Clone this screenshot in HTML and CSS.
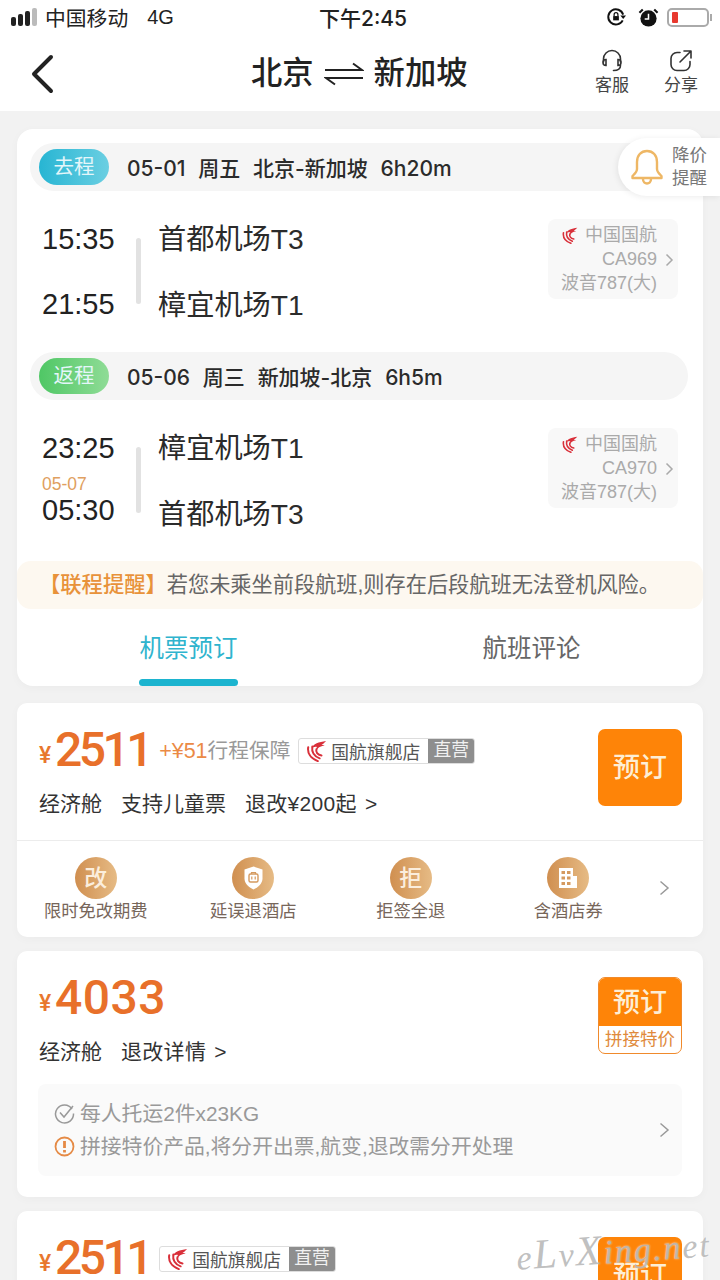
FILE: index.html
```html
<!DOCTYPE html>
<html lang="zh-CN">

<head>
    <meta charset="UTF-8">
    <meta name="viewport" content="width=device-width, initial-scale=1.0">
    <title>北京 - 新加坡</title>
    <link rel="stylesheet" href="styles.css">
</head>

<body>
    <svg class="defs" width="0" height="0">
        <symbol id="airchina" viewBox="0 0 24 24">
            <g fill="none" stroke="#d9303a" stroke-width="2.200" stroke-linecap="round">
                <path d="M3.500 8C2.500 14 6 20 14 23" />
                <path d="M8 7C7 13 10 18 16 20" />
                <path d="M12.500 10C11.500 13 13.500 16 18 17" />
            </g>
            <path d="M7 9C9 4 15 2 23 1c-2 2-3.500 3.500-5 4.500 1.500 0 2.500 0 3.500.5-2.500.5-4.500 1-6 2-1.500 1-2.500 2.500-3 4-.5-1.500-.3-3 .5-4.500C10.500 7 8.500 8 7 9z" fill="#d9303a" />
        </symbol>
    </svg>
    <div class="page">
        <div class="status">
            <div class="status-left">
                <span class="signal"><i></i><i></i><i></i><i class="off"></i></span>
                <span class="carrier">中国移动</span>
                <span class="net">4G</span>
            </div>
            <div class="status-time">下午2:45</div>
            <div class="status-right">
                <svg width="21" height="21" viewBox="0 0 22 22" fill="none" stroke="#111" stroke-width="2">
                    <path d="M17.500 14A8 8 0 1 1 18 8" />
                    <path d="M15 9h6l-3 3.500z" fill="#111" stroke="none" />
                    <rect x="7.500" y="9.500" width="6" height="4.500" fill="#111" stroke="none" />
                    <path d="M8.500 9.500V8a2 2 0 0 1 4 0v1.500" stroke-width="1.300" />
                </svg>
                <svg class="alarm" width="21" height="21" viewBox="0 0 22 22">
                    <circle cx="11" cy="12" r="8.500" fill="#111" />
                    <path d="M11 7v5.500H7" fill="none" stroke="#fff" stroke-width="1.600" />
                    <path d="M1.500 6L5 2.500M20.500 6L17 2.500" stroke="#111" stroke-width="2.200" />
                </svg>
                <span class="battery"><i></i></span>
            </div>
        </div>

        <div class="nav">
            <svg class="back" width="26" height="40" viewBox="0 0 26 40" fill="none" stroke="#222" stroke-width="4" stroke-linecap="round" stroke-linejoin="round">
                <path d="M22 3L5 20l17 17" />
            </svg>
            <div class="nav-title">
                <span>北京</span>
                <svg width="40" height="24" viewBox="0 0 40 24" fill="none" stroke="#222" stroke-width="2">
                    <path d="M1 8h37L29 1.500" />
                    <path d="M39 16H2l9 6.500" />
                </svg>
                <span>新加坡</span>
            </div>
            <div class="nav-tools">
                <div class="tool">
                    <svg width="24" height="24" viewBox="0 0 24 24" fill="none" stroke="#333" stroke-width="1.600" stroke-linecap="round">
                        <path d="M3.500 13V10a8.500 8.500 0 0 1 17 0v3" />
                        <path d="M6 10.500c-2 0-3 1.300-3 3s1 3 3 3z" />
                        <path d="M18 10.500c2 0 3 1.300 3 3s-1 3-3 3z" />
                        <path d="M20.500 16.500c0 3.500-3 5-7 5" />
                    </svg>
                    <span>客服</span>
                </div>
                <div class="tool">
                    <svg width="24" height="24" viewBox="0 0 24 24" fill="none" stroke="#333" stroke-width="1.600" stroke-linecap="round" stroke-linejoin="round">
                        <path d="M11 3.500H8a6 6 0 0 0-6 6v6a6 6 0 0 0 6 6h7a6 6 0 0 0 6-6v-3" />
                        <path d="M11 13L21.500 2.500M15 2h7v7" />
                    </svg>
                    <span>分享</span>
                </div>
            </div>
        </div>

        <div class="main">
            <div class="card trip">
                <div class="seg">
                    <span class="seg-tag tag-go">去程</span>
                    <span class="seg-text">05-01&nbsp; 周五&nbsp; 北京-新加坡&nbsp; 6h20m</span>
                </div>
                <div class="flight">
                    <div class="times">
                        <div class="time">15:35</div>
                        <div class="time">21:55</div>
                    </div>
                    <div class="bar"></div>
                    <div class="airports">
                        <div>首都机场T3</div>
                        <div>樟宜机场T1</div>
                    </div>
                    <div class="plane">
                        <div class="plane-text">
                            <div><svg class="logo-sm" width="17" height="17"><use href="#airchina" /></svg> 中国国航</div>
                            <div>CA969</div>
                            <div>波音787(大)</div>
                        </div>
                        <svg class="chev-sm" width="9" height="14" viewBox="0 0 9 14" fill="none" stroke="#aaa" stroke-width="1.500"><path d="M1.500 1.500L7 7l-5.500 5.500" /></svg>
                    </div>
                </div>
                <div class="seg">
                    <span class="seg-tag tag-back">返程</span>
                    <span class="seg-text">05-06&nbsp; 周三&nbsp; 新加坡-北京&nbsp; 6h5m</span>
                </div>
                <div class="flight">
                    <div class="times">
                        <div class="time">23:25</div>
                        <div class="time time-next">
                            <small>05-07</small>
                            05:30
                        </div>
                    </div>
                    <div class="bar"></div>
                    <div class="airports">
                        <div>樟宜机场T1</div>
                        <div>首都机场T3</div>
                    </div>
                    <div class="plane">
                        <div class="plane-text">
                            <div><svg class="logo-sm" width="17" height="17"><use href="#airchina" /></svg> 中国国航</div>
                            <div>CA970</div>
                            <div>波音787(大)</div>
                        </div>
                        <svg class="chev-sm" width="9" height="14" viewBox="0 0 9 14" fill="none" stroke="#aaa" stroke-width="1.500"><path d="M1.500 1.500L7 7l-5.500 5.500" /></svg>
                    </div>
                </div>
                <div class="notice"><b>【联程提醒】</b><span>若您未乘坐前段航班,则存在后段航班无法登机风险。</span></div>
                <div class="tabs">
                    <div class="tab active">机票预订</div>
                    <div class="tab">航班评论</div>
                </div>
                <div class="remind">
                    <svg width="34" height="38" viewBox="0 0 34 38" fill="none" stroke="#eeb765" stroke-width="2.400" stroke-linejoin="round">
                        <path d="M17 3c-6 0-10 4.500-10 11v7c0 3-2.500 5-4.500 7v2h29v-2c-2-2-4.500-4-4.500-7v-7C27 7.500 23 3 17 3z" />
                        <path d="M13 31c0 3 2 4.500 4 4.500s4-1.500 4-4.500" />
                    </svg>
                    <div>降价<br>提醒</div>
                </div>
            </div>

            <div class="card offer-card">
                <div class="offer">
                    <div class="offer-main">
                        <div class="price-line">
                            <span class="yen">¥</span><span class="price price-tight">2511</span>
                            <span class="extra"><em>+¥51</em>行程保障</span>
                            <span class="badge"><svg width="22" height="22"><use href="#airchina" /></svg><span class="badge-name">国航旗舰店</span><span class="badge-tag">直营</span></span>
                        </div>
                        <div class="sub-line"><span>经济舱</span><span>支持儿童票</span><span class="sub-link">退改¥200起 &gt;</span></div>
                    </div>
                    <div class="book">预订</div>
                </div>
                <div class="perks">
                    <div class="perk"><span class="perk-ico">改</span>限时免改期费</div>
                    <div class="perk">
                        <span class="perk-ico">
                            <svg width="19" height="24" viewBox="0 0 19 24" fill="#fff">
                                <path d="M9.500 0.500l9 3v9c0 5-4 8.500-9 11-5-2.500-9-6-9-11v-9z" />
                                <rect x="5" y="8" width="9" height="8" rx="1.500" fill="none" stroke="#d59a5f" stroke-width="1.400" />
                                <path d="M7.500 8V6.500h4V8M7.800 10.500v3M11.200 10.500v3" fill="none" stroke="#d59a5f" stroke-width="1.200" />
                            </svg>
                        </span>延误退酒店
                    </div>
                    <div class="perk"><span class="perk-ico">拒</span>拒签全退</div>
                    <div class="perk">
                        <span class="perk-ico">
                            <svg width="20" height="22" viewBox="0 0 20 22" fill="#fff">
                                <path d="M1 1h14v8h4v12H1z" />
                                <path d="M3.500 4h3.500v3H3.500zM9 4h3.500v3H9zM3.500 9.500h3.500v3H3.500zM9 9.500h3.500v3H9zM3.500 15h3.500v3H3.500zM9 15h3.500v3H9z" fill="#d59a5f" />
                            </svg>
                        </span>含酒店券
                    </div>
                    <svg class="chev" width="11" height="16" viewBox="0 0 11 16" fill="none" stroke="#999" stroke-width="1.500"><path d="M1.500 1.500L9 8l-7.500 6.500" /></svg>
                </div>
            </div>

            <div class="card offer-card">
                <div class="offer">
                    <div class="offer-main">
                        <div class="price-line">
                            <span class="yen">¥</span><span class="price price-wide">4033</span>
                        </div>
                        <div class="sub-line"><span>经济舱</span><span class="sub-link">退改详情 &gt;</span></div>
                    </div>
                    <div class="book book-split">
                        <div class="book-top">预订</div>
                        <div class="book-bottom">拼接特价</div>
                    </div>
                </div>
                <div class="rules">
                    <div class="rules-list">
                        <div class="rule">
                            <svg width="21" height="21" viewBox="0 0 21 21" fill="none" stroke="#999" stroke-width="1.500">
                                <path d="M18 6a9 9 0 1 0 1.500 4.500" />
                                <path d="M6 9.500l4 4.500 9-11" />
                            </svg>
                            每人托运2件x23KG
                        </div>
                        <div class="rule">
                            <svg width="21" height="21" viewBox="0 0 21 21" fill="none" stroke="#e58a45" stroke-width="1.800">
                                <circle cx="10.500" cy="10.500" r="9" />
                                <path d="M10.500 5v7" stroke-width="2.800" />
                                <path d="M10.500 14v2.500" stroke-width="2.800" />
                            </svg>
                            拼接特价产品,将分开出票,航变,退改需分开处理
                        </div>
                    </div>
                    <svg width="11" height="16" viewBox="0 0 11 16" fill="none" stroke="#999" stroke-width="1.500"><path d="M1.500 1.500L9 8l-7.500 6.500" /></svg>
                </div>
            </div>

            <div class="card offer-card">
                <div class="offer">
                    <div class="offer-main">
                        <div class="price-line">
                            <span class="yen">¥</span><span class="price price-tight">2511</span>
                            <span class="badge"><svg width="22" height="22"><use href="#airchina" /></svg><span class="badge-name">国航旗舰店</span><span class="badge-tag">直营</span></span>
                        </div>
                    </div>
                    <div class="book">预订</div>
                </div>
            </div>
        </div>
        <div class="watermark">e<span>L</span>v<span>X</span>ing.net</div>
    </div>
</body>

</html>
```
FILE: styles.css
```css
* {
    margin: 0;
    padding: 0;
    box-sizing: border-box;
}

html, body {
    height: 1280px;
    overflow: hidden;
}

body {
    font-family: "Liberation Sans", "Noto Sans CJK SC", sans-serif;
    color: #222;
    background-color: #f2f2f2;
}

.defs {
    position: absolute;
}

.page {
    width: 720px;
    height: 1280px;
    position: relative;
    overflow: hidden;
}

/* status bar */
.status {
    height: 36px;
    padding: 0 11px 2px 11px;
    background-color: #fff;
    display: flex;
    align-items: center;
    justify-content: space-between;
    font-size: 20.800px;
    color: #222;
}

.status-left {
    width: 300px;
    display: flex;
    align-items: center;
}

.signal {
    display: flex;
    align-items: flex-end;
    gap: 2px;
    height: 18px;
    margin-right: 8px;
}

.signal i {
    width: 5px;
    border-radius: 2px;
    background-color: #222;
    height: 9px;
}

.signal i:nth-child(2) {
    height: 12px;
}

.signal i:nth-child(3) {
    height: 15px;
}

.signal i.off {
    height: 18px;
    background-color: #bbb;
}

.net {
    margin-left: 19px;
    font-size: 20px;
}

.status-time {
    font-family: Inter, "Noto Sans CJK SC", sans-serif;
    font-size: 21px;
    font-weight: 500;
    margin-left: 8px;
    white-space: nowrap;
}

.status-right {
    flex: 1;
    display: flex;
    align-items: center;
    justify-content: flex-end;
    gap: 8px;
}

.alarm {
    margin-left: 3px;
}

.battery {
    width: 42px;
    height: 19px;
    border: 2px solid #aaa;
    border-radius: 5px;
    padding: 2px 3px;
    display: block;
    position: relative;
}

.battery::after {
    content: "";
    position: absolute;
    right: -5px;
    top: 4px;
    width: 2px;
    height: 7px;
    background-color: #aaa;
}

.battery i {
    display: block;
    width: 6px;
    height: 11px;
    border-radius: 1px;
    background-color: #e8392f;
}

/* title bar */
.nav {
    height: 75px;
    background-color: #fff;
    display: flex;
    align-items: center;
    position: relative;
    padding: 0 22px 0 29px;
}

.nav-title {
    position: absolute;
    left: 251px;
    top: 16px;
    display: flex;
    align-items: center;
    gap: 10px;
    font-size: 31.300px;
    font-weight: 500;
    line-height: 44px;
}

.nav-tools {
    margin-left: auto;
    display: flex;
    gap: 35px;
}

.tool {
    display: flex;
    flex-direction: column;
    align-items: center;
    font-size: 17px;
    line-height: 24px;
    color: #444;
    gap: 1px;
}

/* content */
.main {
    padding: 18px 17px 0;
    display: flex;
    flex-direction: column;
    gap: 14px;
}

.card {
    background-color: #fff;
    border-radius: 10px;
    box-shadow: 0 2px 10px rgba(0, 0, 0, 0.03);
}

.trip {
    position: relative;
    padding-top: 14px;
    margin-bottom: 3px;
    border-radius: 16px;
}

.seg {
    height: 48px;
    margin: 0 15px 0 13px;
    padding-left: 9px;
    border-radius: 24px;
    background-color: #f5f5f5;
    display: flex;
    align-items: center;
}

.seg-tag {
    width: 70px;
    height: 36px;
    border-radius: 18px;
    line-height: 35px;
    text-align: center;
    font-size: 20.500px;
    color: #e4f6fa;
}

.tag-go {
    background: linear-gradient(90deg, #27b5d3, #6bcfe2);
}

.tag-back {
    background: linear-gradient(90deg, #4fc765, #8fdc96);
}

.seg-text {
    margin-left: 18px;
    font-family: Inter, "Noto Sans CJK SC", sans-serif;
    font-size: 21px;
    font-weight: 500;
    word-spacing: 0.800px;
    color: #2b2b2b;
    white-space: nowrap;
}

.flight {
    height: 161px;
    padding: 28px 25px 0;
    display: flex;
    position: relative;
}

.times {
    width: 94px;
    flex-shrink: 0;
    display: flex;
    flex-direction: column;
    gap: 25px;
}

.time {
    height: 40px;
    font-size: 29px;
    line-height: 40px;
    color: #222;
    position: relative;
}

.time-next {
    margin-top: -3px;
}

.time small {
    position: absolute;
    left: 0;
    top: -16px;
    font-size: 17.500px;
    line-height: 20px;
    color: #e0a060;
}

.bar {
    width: 5px;
    height: 66px;
    margin-top: 19px;
    border-radius: 3px;
    background-color: #e2e2e2;
    flex-shrink: 0;
}

.airports {
    margin-left: 17px;
    display: flex;
    flex-direction: column;
    gap: 25px;
    font-size: 28.200px;
    line-height: 41px;
    color: #2b2b2b;
}

.plane {
    margin-left: auto;
    width: 130px;
    height: 80px;
    border-radius: 8px;
    background-color: #f8f8f8;
    display: flex;
    align-items: center;
    justify-content: flex-end;
    padding-right: 4px;
    position: relative;
}

.plane-text {
    text-align: right;
    font-size: 18px;
    line-height: 24px;
    color: #aaa;
    white-space: nowrap;
    margin-right: 8px;
}

.logo-sm {
    vertical-align: -3px;
    margin-right: 2px;
}

.chev-sm {
    margin-top: 2px;
}

.notice {
    height: 48px;
    padding-left: 22px;
    border-radius: 14px;
    line-height: 48px;
    background-color: #fdf8f0;
    font-size: 21.300px;
    color: #666;
    white-space: nowrap;
    display: flex;
}

.notice b {
    font-weight: 500;
    color: #e8923a;
}

.notice span {
    font-size: 21.200px;
}

.tabs {
    height: 77px;
    display: flex;
}

.tab {
    flex: 1;
    text-align: center;
    font-size: 24.500px;
    line-height: 79px;
    color: #666;
    position: relative;
}

.tab.active {
    color: #2fb4ce;
}

.tab.active::after {
    content: "";
    position: absolute;
    left: 122px;
    bottom: 0;
    width: 99px;
    height: 7px;
    border-radius: 4px;
    background-color: #1cb4cf;
}

.remind {
    position: absolute;
    top: 9px;
    right: -17px;
    width: 102px;
    height: 58px;
    padding-left: 12px;
    border-radius: 29px 0 0 29px;
    background-color: #fff;
    box-shadow: -1px 1px 6px rgba(0, 0, 0, 0.08);
    display: flex;
    align-items: center;
    gap: 8px;
    font-size: 17.500px;
    line-height: 23px;
    color: #777;
}

/* offers */
.offer {
    display: flex;
    justify-content: space-between;
    padding: 26px 21px 0 22px;
}

.price-line {
    height: 46px;
    padding-bottom: 5px;
    display: flex;
    align-items: center;
}

.yen {
    font-family: Roboto, sans-serif;
    font-weight: 500;
    color: #e8772e;
    font-size: 23px;
    width: 16px;
    padding-top: 12px;
}

.price {
    font-family: Roboto, sans-serif;
    font-weight: 500;
    color: #e8702a;
    font-size: 48px;
    line-height: 46px;
}

.price-wide {
    letter-spacing: 0.500px;
}

.price-tight {
    letter-spacing: -3.500px;
    margin-right: 9px;
}

.extra {
    font-size: 20.700px;
    color: #999;
    white-space: nowrap;
    margin-right: 8px;
    margin-bottom: 1px;
}

.extra em {
    font-style: normal;
    font-size: 21.500px;
    color: #eb8a45;
}

.badge {
    height: 26px;
    margin-top: 3px;
    display: flex;
    align-items: center;
    border: 1px solid #ddd;
    border-radius: 3px;
    padding-left: 6px;
    white-space: nowrap;
    overflow: hidden;
}

.badge-name {
    font-size: 17.800px;
    color: #555;
    margin-left: 4px;
    margin-right: 8px;
}

.badge-tag {
    background-color: #8e8e8e;
    color: #f1f1f1;
    font-size: 17.800px;
    height: 26px;
    width: 46px;
    line-height: 25px;
    text-align: center;
}

.sub-line {
    margin-top: 11px;
    height: 36px;
    line-height: 36px;
    font-size: 21px;
    color: #333;
    display: flex;
    gap: 19px;
    white-space: nowrap;
}

.sub-link {
    letter-spacing: 0.300px;
    word-spacing: 2px;
}

.book {
    width: 84px;
    height: 77px;
    border-radius: 7px;
    background-color: #fe8408;
    color: #fdeed5;
    font-size: 27px;
    font-weight: 500;
    line-height: 78px;
    text-align: center;
    flex-shrink: 0;
}

.book-split {
    overflow: hidden;
    border: 1.500px solid #f08a2c;
    background-color: #fff;
    line-height: 1;
    display: flex;
    flex-direction: column;
}

.book-top {
    height: 48px;
    line-height: 50px;
    background-color: #fe8408;
}

.book-bottom {
    flex: 1;
    font-size: 17.500px;
    font-weight: 400;
    line-height: 26px;
    color: #e08a3c;
    white-space: nowrap;
}

.perks {
    margin-top: 18px;
    height: 97px;
    border-top: 1px solid #ececec;
    display: grid;
    grid-template-columns: repeat(4, 157.500px) 1fr;
    align-items: start;
    padding-top: 16px;
}

.perk {
    display: flex;
    flex-direction: column;
    align-items: center;
    font-size: 17.300px;
    line-height: 22px;
    color: #77665a;
}

.perk-ico {
    width: 42px;
    height: 42px;
    border-radius: 50%;
    background: linear-gradient(90deg, #d08f50, #e6bb85);
    color: #fbeedd;
    font-size: 23px;
    font-weight: 500;
    line-height: 41px;
    text-align: center;
    display: flex;
    align-items: center;
    justify-content: center;
    margin-bottom: 1px;
}

.chev {
    margin-top: 23px;
    margin-left: 12px;
}

.rules {
    margin: 14px 21px 21px 21px;
    height: 92px;
    border-radius: 8px;
    background-color: #fafafa;
    display: flex;
    align-items: center;
    justify-content: space-between;
    padding: 0 12px 0 16px;
}

.rules-list {
    display: flex;
    flex-direction: column;
    gap: 4px;
}

.rule {
    display: flex;
    align-items: center;
    gap: 5px;
    font-size: 20.800px;
    line-height: 29px;
    color: #999;
    white-space: nowrap;
}

.watermark {
    position: absolute;
    left: 516px;
    top: 1225px;
    font-family: "Liberation Serif", serif;
    font-style: italic;
    font-size: 34px;
    letter-spacing: 2px;
    color: rgba(175, 175, 175, 0.8);
    text-shadow: 0 0 2px rgba(255, 255, 255, 0.8);
    white-space: nowrap;
    transform: rotate(-4deg);
}

.watermark span {
    font-size: 42px;
}
```
